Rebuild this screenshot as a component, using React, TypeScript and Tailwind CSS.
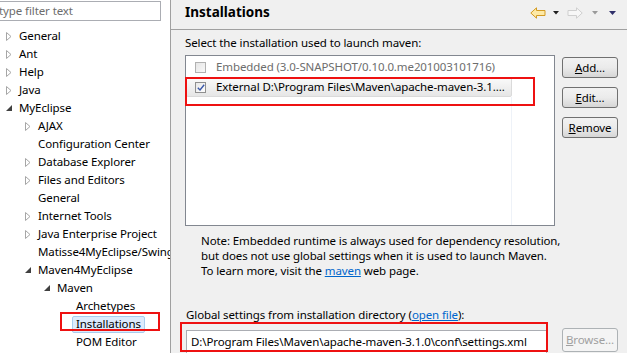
import React from "react";

type Node = { label: string; level: number; arrow?: "closed" | "open" };

const tree: Node[] = [
  { label: "General", level: 0, arrow: "closed" },
  { label: "Ant", level: 0, arrow: "closed" },
  { label: "Help", level: 0, arrow: "closed" },
  { label: "Java", level: 0, arrow: "closed" },
  { label: "MyEclipse", level: 0, arrow: "open" },
  { label: "AJAX", level: 1, arrow: "closed" },
  { label: "Configuration Center", level: 1 },
  { label: "Database Explorer", level: 1, arrow: "closed" },
  { label: "Files and Editors", level: 1, arrow: "closed" },
  { label: "General", level: 1 },
  { label: "Internet Tools", level: 1, arrow: "closed" },
  { label: "Java Enterprise Project", level: 1, arrow: "closed" },
  { label: "Matisse4MyEclipse/Swing", level: 1 },
  { label: "Maven4MyEclipse", level: 1, arrow: "open" },
  { label: "Maven", level: 2, arrow: "open" },
  { label: "Archetypes", level: 3 },
  { label: "Installations", level: 3 },
  { label: "POM Editor", level: 3 },
];

const levelPad = ["pl-[6px]", "pl-[25px]", "pl-[44px]", "pl-[63px]"];

function ClosedArrow() {
  return (
    <svg width="6" height="9" viewBox="0 0 6 9">
      <path d="M0.5 0.5 L5 4.5 L0.5 8.5 Z" fill="#fff" stroke="#a6a6a6" strokeWidth="1" />
    </svg>
  );
}

function OpenArrow() {
  return (
    <svg width="6" height="6" viewBox="0 0 6 6">
      <path d="M6 0 L6 6 L0 6 Z" fill="#404040" />
    </svg>
  );
}

function Btn({ label, disabled }: { label: string; disabled?: boolean }) {
  return (
    <div
      className={
        disabled
          ? "w-[56px] h-[24px] rounded-[3px] border border-[#adb2b5] bg-[#f4f4f4] flex items-center justify-center text-[#a0a0a0]"
          : "w-[56px] h-[21px] rounded-[3px] border border-[#707070] bg-gradient-to-b from-[#f2f2f2] via-[#ebebeb] to-[#d6d6d6] flex items-center justify-center text-black"
      }
    >
      <span>
        <span className="underline">{label[0]}</span>
        {label.slice(1)}
      </span>
    </div>
  );
}

export default function App() {
  return (
    <div className="relative w-[627px] h-[353px] overflow-hidden flex bg-[#f0f0f0] text-[11.5px] tracking-[-0.1px] leading-[16px] text-black font-['Noto_Sans',sans-serif]">
      {/* Sidebar */}
      <div className="w-[171px] shrink-0 h-full bg-white border-r border-[#a0a0a0] overflow-hidden">
        <div className="mt-[1px] h-[20px] w-[161px] border-y border-r border-[#abadb3] flex items-center overflow-hidden">
          <span className="-ml-[1px] text-[#6d6d6d] whitespace-nowrap">type filter text</span>
        </div>
        <div className="pt-[6px]">
          {tree.map((n, i) => (
            <div key={i} className={"h-[18px] flex items-center whitespace-nowrap " + levelPad[n.level]}>
              <div className="w-[13px] shrink-0 flex items-center">
                {n.arrow === "closed" && <ClosedArrow />}
                {n.arrow === "open" && <OpenArrow />}
              </div>
              {n.label === "Installations" ? (
                <span className="-ml-[4px] px-[3px] h-[17px] flex items-center bg-[#dcebfc] border border-[#a9cdee] rounded-[2px]">
                  {n.label}
                </span>
              ) : (
                <span>{n.label}</span>
              )}
            </div>
          ))}
        </div>
      </div>

      {/* Right pane */}
      <div className="flex-1 flex flex-col min-w-0">
        <div className="h-[30px] shrink-0 border-b border-[#a0a0a0] flex items-center pl-[14px]">
          <span className="text-[13.5px] tracking-normal font-bold leading-[20px] -mt-[5px]">Installations</span>
          <div className="ml-auto flex items-center pr-[11px] -mt-[4px]">
            <svg width="16" height="12" viewBox="0 0 16 12">
              <path d="M0.8 6 L6.5 0.8 L6.5 3.5 L15 3.5 L15 8.5 L6.5 8.5 L6.5 11.2 Z" fill="#fde9a6" stroke="#d39a22" strokeWidth="1" />
            </svg>
            <svg className="ml-[7px]" width="6" height="4" viewBox="0 0 6 4">
              <path d="M0 0 L6 0 L3 3.5 Z" fill="#202020" />
            </svg>
            <svg className="ml-[8px]" width="16" height="12" viewBox="0 0 16 12">
              <path d="M15.2 6 L9.5 0.8 L9.5 3.5 L1 3.5 L1 8.5 L9.5 8.5 L9.5 11.2 Z" fill="#f7f7f7" stroke="#cfcfcf" strokeWidth="1" />
            </svg>
            <svg className="ml-[9px]" width="6" height="4" viewBox="0 0 6 4">
              <path d="M0 0 L6 0 L3 3.5 Z" fill="#9a9a9a" />
            </svg>
            <svg className="ml-[11px]" width="7" height="4" viewBox="0 0 7 4">
              <path d="M0 0 L7 0 L3.5 4 Z" fill="#2f2f6a" />
            </svg>
          </div>
        </div>

        <div className="pl-[14px] flex flex-col">
          <div className="mt-[5px] whitespace-nowrap">Select the installation used to launch maven:</div>
          <div className="mt-[4px] flex items-start">
            <div className="relative w-[370px] h-[171px] bg-white border border-[#828790] pt-[1px]">
              <div className="h-[20px] flex items-center whitespace-nowrap">
                <div className="ml-[9px] w-[11px] h-[11px] border border-[#b1b1b1] bg-gradient-to-br from-[#e6e6e6] to-[#f8f8f8]" />
                <span className="ml-[10px] text-[#6d6d6d]">Embedded (3.0-SNAPSHOT/0.10.0.me201003101716)</span>
              </div>
              <div className="h-[20px] w-[326px] flex items-center whitespace-nowrap rounded-[2px] bg-gradient-to-b from-[#fafafa] to-[#e6e6e6] border border-[#dadada]">
                <div className="ml-[8px] w-[11px] h-[11px] border border-[#8f8f8f] bg-gradient-to-br from-[#e8e8e8] to-[#fdfdfd] flex items-center justify-center">
                  <svg width="8" height="7" viewBox="0 0 8 7">
                    <path d="M0.8 3.8 L3 6 L7.2 0.8" fill="none" stroke="#3a57a8" strokeWidth="1.4" />
                  </svg>
                </div>
                <span className="ml-[10px]">External D:\Program Files\Maven\apache-maven-3.1....</span>
              </div>
              <div className="absolute left-[325px] top-[41px] bottom-0 w-px bg-[#eef2f8]" />
            </div>
            <div className="ml-[7px] mt-[2px] flex flex-col gap-[9px]">
              <Btn label="Add..." />
              <Btn label="Edit..." />
              <Btn label="Remove" />
            </div>
          </div>
          <div className="mt-[7px] ml-[16px] leading-[15px] whitespace-nowrap">
            <div>Note: Embedded runtime is always used for dependency resolution,</div>
            <div>but does not use global settings when it is used to launch Maven.</div>
            <div>
              To learn more, visit the <span className="text-[#0066cc] underline">maven</span> web page.
            </div>
          </div>
          <div className="mt-[29px] ml-[1px] whitespace-nowrap">
            Global settings from installation directory (<span className="text-[#0066cc] underline">open file</span>):
          </div>
          <div className="mt-[7px] flex items-start">
            <div className="ml-[1px] w-[361px] h-[24px] bg-white border border-[#abadb3] flex items-center pl-[4px] whitespace-nowrap">
              D:\Program Files\Maven\apache-maven-3.1.0\conf\settings.xml
            </div>
            <div className="ml-[15px] -mt-[2px]">
              <Btn label="Browse..." disabled />
            </div>
          </div>
        </div>
      </div>

      {/* Red annotation boxes */}
      <div className="absolute left-[60px] top-[312px] w-[100px] h-[19px] border-2 border-[#ee1111]" />
      <div className="absolute left-[185px] top-[77px] w-[350px] h-[29px] border-2 border-[#ee1111]" />
      <div className="absolute left-[180px] top-[322px] w-[368px] h-[30px] border-2 border-[#ee1111]" />
    </div>
  );
}
